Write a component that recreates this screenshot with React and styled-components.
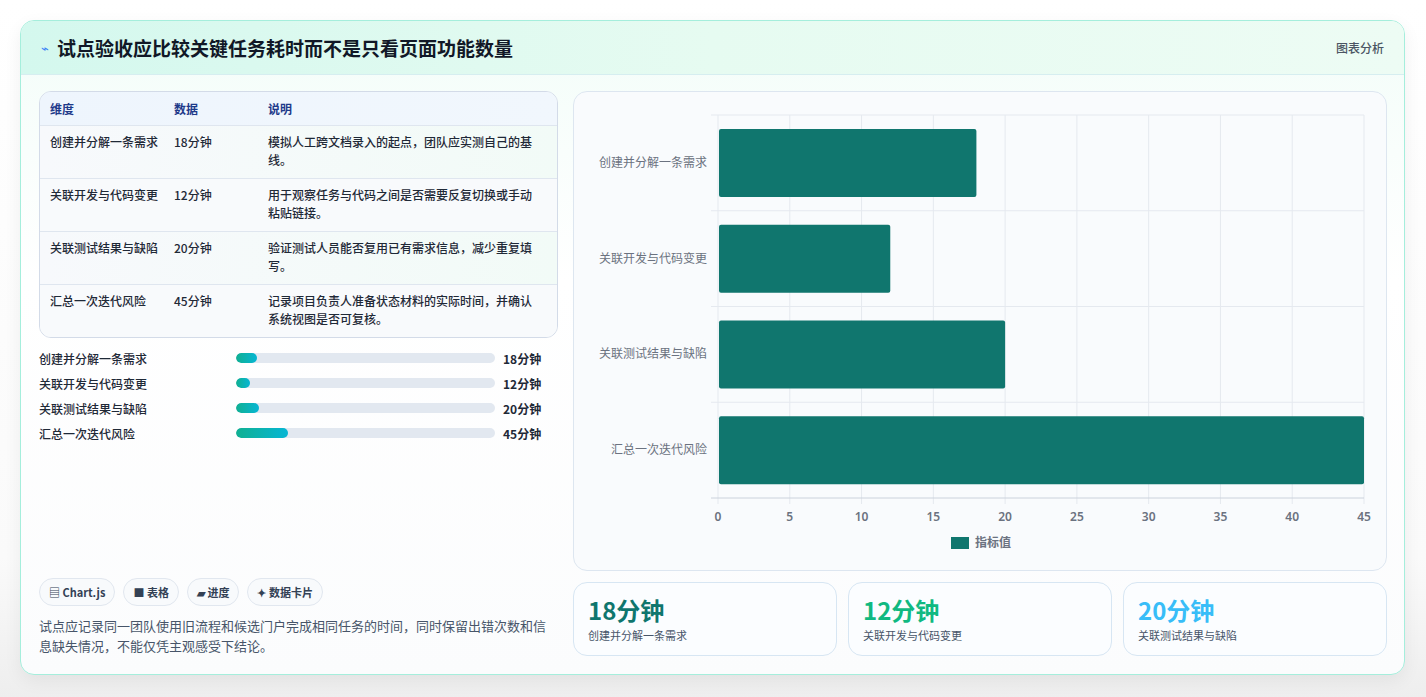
import React from "react";
import styled, { createGlobalStyle } from "styled-components";

const Global = createGlobalStyle`
  html,body{margin:0;padding:0;background:#f3f4f6;}
  body{font-family:"Noto Sans CJK SC","Noto Sans",sans-serif;}
  *{box-sizing:border-box;}
`;
const Page = styled.div`
  width:1426px;height:697px;padding:20px 21px 22px 20px;
  background:linear-gradient(180deg,#ffffff 0%,#fafafa 80%,#eeeeee 100%);
`;
const Card = styled.div`
  height:655px;border:1px solid #a5eedc;border-radius:14px;overflow:hidden;
  background:linear-gradient(180deg,#f3fdf9 0%,#ffffff 40%,#fbfcfd 100%);
  box-shadow:0 6px 18px rgba(0,0,0,0.06);display:flex;flex-direction:column;
`;
const Header = styled.div`
  height:55px;display:flex;align-items:center;justify-content:space-between;
  padding:0 20px 0 20px;border-bottom:1px solid #d6eef0;
  background:linear-gradient(90deg,#d4f8ee 0%,#e6fbf1 50%,#edfcf4 100%);
`;
const Title = styled.h1`
  margin:0;font-size:19px;font-weight:700;color:#111827;display:flex;align-items:center;gap:8px;
`;
const Bolt = styled.span`color:#3b82f6;font-size:13px;font-weight:400;`;
const Tag = styled.span`font-size:12px;color:#4b5563;font-weight:500;`;
const Body = styled.div`
  flex:1;display:grid;grid-template-columns:519px 814px;gap:15px;padding:16px 18px 18px 18px;
`;
const Left = styled.div`display:flex;flex-direction:column;`;
const Table = styled.div`
  border:1px solid #d3dbe8;border-radius:12px;overflow:hidden;background:#f8fafc;
`;
const Row = styled.div`
  display:grid;grid-template-columns:124px 94px 1fr;padding:0 10px;
  border-top:${p=>p.$head?"none":"1px solid #dfe6ef"};
  background:${p=>p.$head?"linear-gradient(90deg,#eef5fd,#f1f7fd)":p.$alt?"linear-gradient(90deg,#f7f9fc,#f2fbf7)":"#f8fafc"};
  min-height:${p=>p.$head?"33px":"53px"};align-items:${p=>p.$head?"center":"start"};
  padding-top:${p=>p.$head?"0":"7px"};
`;
const Cell = styled.div`
  font-size:12px;line-height:18px;padding-right:8px;
  color:${p=>p.$head?"#1e3a8a":"#1f2937"};font-weight:${p=>p.$head?600:500};
`;
const Bars = styled.div`display:flex;flex-direction:column;gap:7px;margin-top:11px;`;
const BarRow = styled.div`display:grid;grid-template-columns:189px 259px 1fr;align-items:center;height:18px;column-gap:8px;`;
const BarLabel = styled.div`font-size:12px;color:#1f2937;font-weight:500;`;
const Track = styled.div`height:10px;border-radius:5px;background:#e2e8f0;overflow:hidden;`;
const Fill = styled.div`height:100%;border-radius:5px;background:linear-gradient(90deg,#10b092,#06b6d4);`;
const BarVal = styled.div`font-size:12px;font-weight:700;color:#1f2937;`;
const Spacer = styled.div`flex:1;`;
const Chips = styled.div`display:flex;gap:8px;`;
const Chip = styled.div`
  height:28px;padding:0 9px;border:1px solid #e1e7ef;border-radius:14px;background:#f8fafc;
  display:flex;align-items:center;font-size:11px;font-weight:600;color:#334155;gap:3px;
`;
const Note = styled.p`margin:10px 0 0;font-size:13px;line-height:20px;color:#475569;`;
const Right = styled.div`display:flex;flex-direction:column;gap:11px;`;
const ChartPanel = styled.div`
  height:480px;border:1px solid #dde6f0;border-radius:14px;background:#f9fbfd;
`;
const Stats = styled.div`display:grid;grid-template-columns:repeat(3,1fr);gap:11px;`;
const Stat = styled.div`
  height:74px;border:1px solid #d7e6f3;border-radius:14px;background:#fbfdff;padding:12px 14px;
`;
const StatNum = styled.div`font-size:24px;font-weight:700;line-height:30px;color:${p=>p.$c};`;
const StatLabel = styled.div`font-size:11px;color:#475569;margin-top:2px;`;

const rows = [
  ["创建并分解一条需求","18分钟","模拟人工跨文档录入的起点，团队应实测自己的基线。",18],
  ["关联开发与代码变更","12分钟","用于观察任务与代码之间是否需要反复切换或手动粘贴链接。",12],
  ["关联测试结果与缺陷","20分钟","验证测试人员能否复用已有需求信息，减少重复填写。",20],
  ["汇总一次迭代风险","45分钟","记录项目负责人准备状态材料的实际时间，并确认系统视图是否可复核。",45],
];

function Chart(){
  const L=144,R=790,T=23,B=406,u=(R-L)/45,band=(B-T)/4;
  return (
    <svg width="812" height="478" viewBox="0 0 812 478" style={{display:"block"}}>
      {Array.from({length:10},(_,i)=>(
        <g key={i}>
          <line x1={L+i*5*u} x2={L+i*5*u} y1={T} y2={B+6} stroke="#e5e9ef"/>
          <text x={L+i*5*u} y={429} textAnchor="middle" fontSize="12" fontWeight="600" fill="#6b7280" fontFamily="Noto Sans, sans-serif">{i*5}</text>
        </g>
      ))}
      {Array.from({length:5},(_,i)=>(
        <line key={i} x1={L-7} x2={R} y1={T+i*band} y2={T+i*band} stroke={i===4?"#cbd2dc":"#e5e9ef"}/>
      ))}
      {rows.map((r,i)=>(
        <g key={i}>
          <rect x={L+1} y={T+i*band+14} width={r[3]*u-1} height={68} rx="2" fill="#10766e"/>
          <text x={133} y={T+i*band+band/2+4} textAnchor="end" fontSize="12" fill="#6b7280" fontFamily="Noto Sans CJK SC, sans-serif">{r[0]}</text>
        </g>
      ))}
      <rect x="377" y="445" width="18" height="12" fill="#10766e"/>
      <text x="401" y="455" fontSize="12" fill="#6b7280" fontWeight="600" fontFamily="Noto Sans CJK SC, sans-serif">指标值</text>
    </svg>
  );
}

export default function App(){
  return (<>
    <Global/>
    <Page><Card>
      <Header>
        <Title><Bolt>⌁</Bolt>试点验收应比较关键任务耗时而不是只看页面功能数量</Title>
        <Tag>图表分析</Tag>
      </Header>
      <Body>
        <Left>
          <Table>
            <Row $head><Cell $head>维度</Cell><Cell $head>数据</Cell><Cell $head>说明</Cell></Row>
            {rows.map((r,i)=>(
              <Row key={i} $alt={i%2===0}><Cell>{r[0]}</Cell><Cell>{r[1]}</Cell><Cell>{r[2]}</Cell></Row>
            ))}
          </Table>
          <Bars>
            {rows.map((r,i)=>(
              <BarRow key={i}><BarLabel>{r[0]}</BarLabel><Track><Fill style={{width:`${r[3]*0.45}%`}}/></Track><BarVal>{r[1]}</BarVal></BarRow>
            ))}
          </Bars>
          <Spacer/>
          <Chips>
            <Chip>▤ Chart.js</Chip><Chip>■ 表格</Chip><Chip>▰ 进度</Chip><Chip>✦ 数据卡片</Chip>
          </Chips>
          <Note>试点应记录同一团队使用旧流程和候选门户完成相同任务的时间，同时保留出错次数和信息缺失情况，不能仅凭主观感受下结论。</Note>
        </Left>
        <Right>
          <ChartPanel><Chart/></ChartPanel>
          <Stats>
            <Stat><StatNum $c="#0f766e">18分钟</StatNum><StatLabel>创建并分解一条需求</StatLabel></Stat>
            <Stat><StatNum $c="#10b981">12分钟</StatNum><StatLabel>关联开发与代码变更</StatLabel></Stat>
            <Stat><StatNum $c="#38bdf8">20分钟</StatNum><StatLabel>关联测试结果与缺陷</StatLabel></Stat>
          </Stats>
        </Right>
      </Body>
    </Card></Page>
  </>);
}
